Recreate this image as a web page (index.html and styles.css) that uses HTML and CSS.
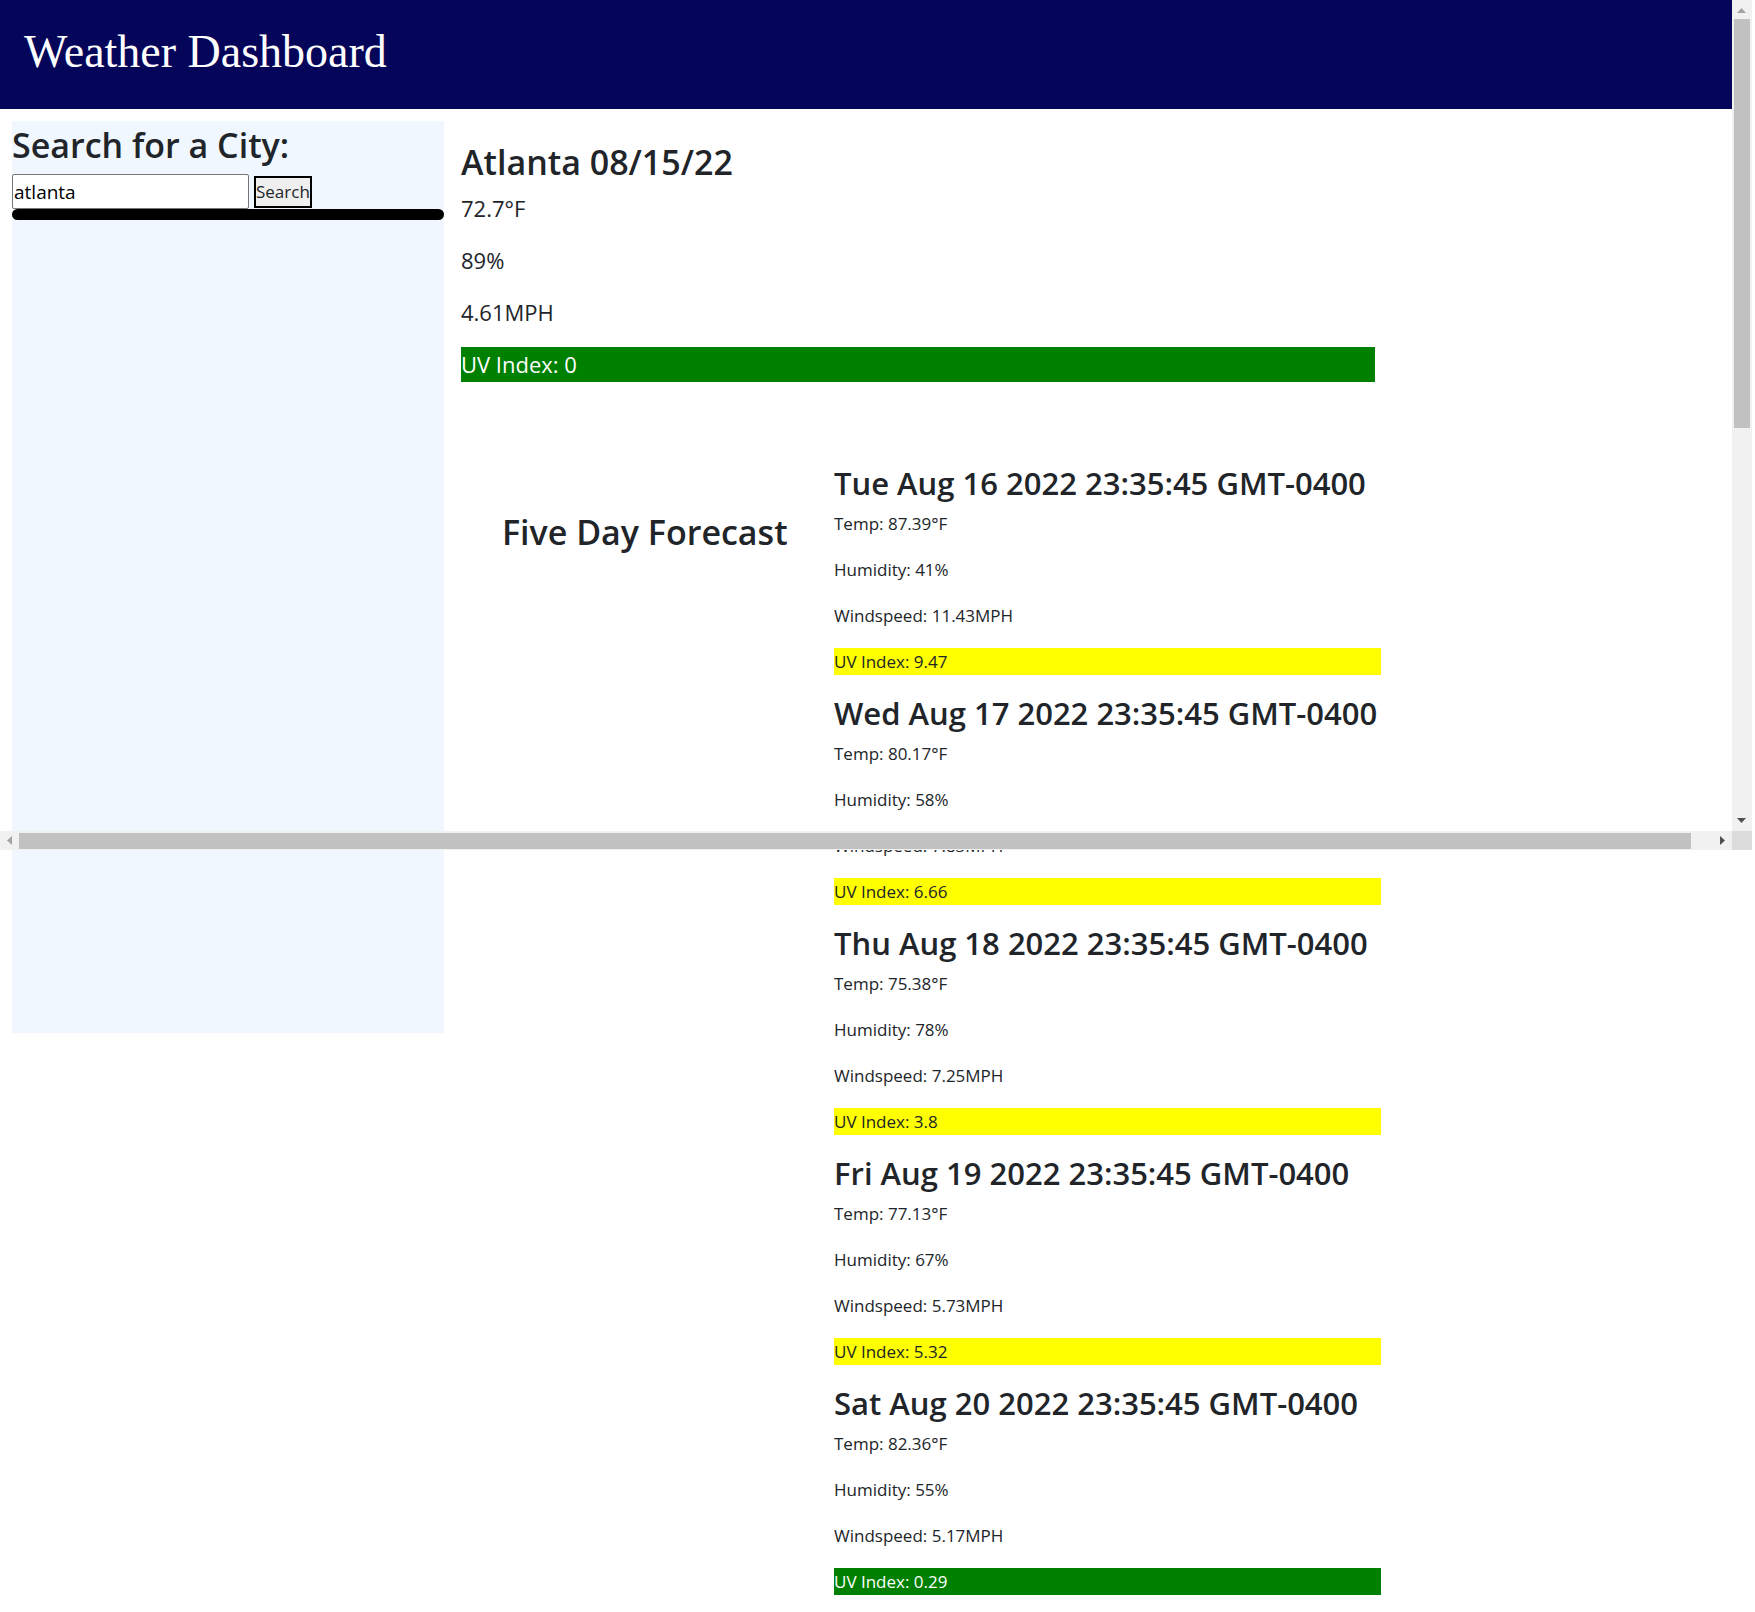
FILE: index.html
```html
<!DOCTYPE html>
<html lang="en">
<head>
<meta charset="utf-8">
<meta name="viewport" content="width=device-width, initial-scale=1">
<title>Weather Dashboard</title>
<link rel="stylesheet" href="styles.css">
</head>
<body>
<header class="site-header">
  <h1 class="site-title">Weather Dashboard</h1>
</header>
<div class="layout">
  <aside class="sidebar">
    <h2 class="heading"><label for="city">Search for a City:</label></h2>
    <form class="search">
      <input class="search-input" id="city" type="text" value="atlanta">
      <button class="search-button" type="button">Search</button>
    </form>
    <div class="history"></div>
  </aside>
  <main class="main">
    <section class="current">
      <h2 class="heading">Atlanta 08/15/22</h2>
      <p>72.7°F</p>
      <p>89%</p>
      <p>4.61MPH</p>
      <p class="uv-low">UV Index: 0</p>
    </section>
    <section class="forecast">
      <h2 class="heading forecast-title">Five Day Forecast</h2>
      <div class="days">
        <article class="day">
          <h3 class="day-title">Tue Aug 16 2022 23:35:45 GMT-0400</h3>
          <p>Temp: 87.39°F</p>
          <p>Humidity: 41%</p>
          <p>Windspeed: 11.43MPH</p>
          <p class="uv-high">UV Index: 9.47</p>
        </article>
        <article class="day">
          <h3 class="day-title">Wed Aug 17 2022 23:35:45 GMT-0400</h3>
          <p>Temp: 80.17°F</p>
          <p>Humidity: 58%</p>
          <p>Windspeed: 7.83MPH</p>
          <p class="uv-high">UV Index: 6.66</p>
        </article>
        <article class="day">
          <h3 class="day-title">Thu Aug 18 2022 23:35:45 GMT-0400</h3>
          <p>Temp: 75.38°F</p>
          <p>Humidity: 78%</p>
          <p>Windspeed: 7.25MPH</p>
          <p class="uv-high">UV Index: 3.8</p>
        </article>
        <article class="day">
          <h3 class="day-title">Fri Aug 19 2022 23:35:45 GMT-0400</h3>
          <p>Temp: 77.13°F</p>
          <p>Humidity: 67%</p>
          <p>Windspeed: 5.73MPH</p>
          <p class="uv-high">UV Index: 5.32</p>
        </article>
        <article class="day">
          <h3 class="day-title">Sat Aug 20 2022 23:35:45 GMT-0400</h3>
          <p>Temp: 82.36°F</p>
          <p>Humidity: 55%</p>
          <p>Windspeed: 5.17MPH</p>
          <p class="uv-low">UV Index: 0.29</p>
        </article>
      </div>
    </section>
  </main>
</div>
<div class="scrollbar scrollbar-y" aria-hidden="true">
  <svg class="arrow" width="19" height="19" viewBox="0 0 19 19"><path d="M5 13h9l-4.500-5z" fill="#a3a3a3"/></svg>
  <div class="thumb"></div>
  <svg class="arrow" width="19" height="19" viewBox="0 0 19 19"><path d="M5 6h9l-4.500 5z" fill="#505050"/></svg>
</div>
<div class="scrollbar scrollbar-x" aria-hidden="true">
  <svg class="arrow" width="19" height="19" viewBox="0 0 19 19"><path d="M12 5v9L7 9.500z" fill="#a3a3a3"/></svg>
  <div class="thumb"></div>
  <svg class="arrow" width="19" height="19" viewBox="0 0 19 19"><path d="M7 5v9l5-4.500z" fill="#505050"/></svg>
  <div class="corner"></div>
</div>
</body>
</html>
```
FILE: styles.css
```css
* {
  box-sizing: border-box;
}

body {
  position: relative;
  margin: 0;
  padding-right: 23px;
  background: #fff;
  color: #212529;
  font-family: "Open Sans", "Noto Sans", sans-serif;
  font-size: 17px;
  line-height: 27px;
}

h1,
h2,
h3,
p {
  margin: 0;
}

.site-header {
  padding: 24px 24px 30px;
  background: #05055a;
  color: #fff;
}

.site-title {
  font: 400 46px/55px "Liberation Serif", serif;
}

.layout {
  display: flex;
  align-items: flex-start;
  gap: 17px;
  padding: 12px 12px 0;
}

.heading {
  margin-bottom: 5px;
  font-size: 34px;
  font-weight: 600;
  line-height: 48px;
}

/* Search column */
.sidebar {
  flex: 0 0 432px;
  min-height: 912px;
  background: #f0f7ff;
}

.search {
  display: flex;
  align-items: center;
  gap: 5px;
}

.search-input {
  width: 237px;
  height: 35px;
  padding: 1px;
  border: 1px solid #767676;
  border-radius: 2px;
  background: #fff;
  color: #000;
  font: 400 19px/30px "Open Sans", sans-serif;
}

.search-button {
  height: 32px;
  padding: 0;
  border: 2px solid #000;
  background: #efefef;
  color: #212529;
  font: 400 17px/27px "Open Sans", sans-serif;
}

.history {
  height: 11px;
  border-radius: 6px;
  background: #000;
}

/* Weather column */
.main {
  flex: 1;
  padding-top: 17px;
}

.current {
  max-width: 914px;
  font-size: 22px;
  line-height: 35px;
}

.current p {
  margin-bottom: 17px;
}

.forecast {
  display: flex;
  gap: 46px;
  padding: 65px 0 0 41px;
}

.forecast-title {
  flex: 0 0 286px;
  padding-top: 44px;
  white-space: nowrap;
}

.days {
  display: grid;
  flex: 0 1 547px;
  gap: 19px;
}

.day p + p {
  margin-top: 19px;
}

.day-title {
  margin-bottom: 8px;
  font-size: 31px;
  font-weight: 600;
  line-height: 38px;
  white-space: nowrap;
}

.uv-low {
  background: #008000;
  color: #fff;
}

.uv-high {
  background: #ff0;
}

/* Viewport scrollbars, laid over the page */
.scrollbar {
  position: absolute;
  display: flex;
  background: #f1f1f1;
}

.scrollbar-y {
  top: 0;
  right: 3px;
  flex-direction: column;
  justify-content: space-between;
  width: 20px;
  height: 831px;
}

.scrollbar-x {
  top: 831px;
  left: 0;
  right: 3px;
  height: 19px;
}

.arrow {
  flex: none;
}

.thumb {
  background: #c1c1c1;
}

.scrollbar-y .thumb {
  height: 409px;
  margin: 0 2px auto;
}

.scrollbar-x .thumb {
  flex: 1;
  margin: 2px 22px 1px 0;
}

.corner {
  width: 20px;
  background: #dcdcdc;
}
```
